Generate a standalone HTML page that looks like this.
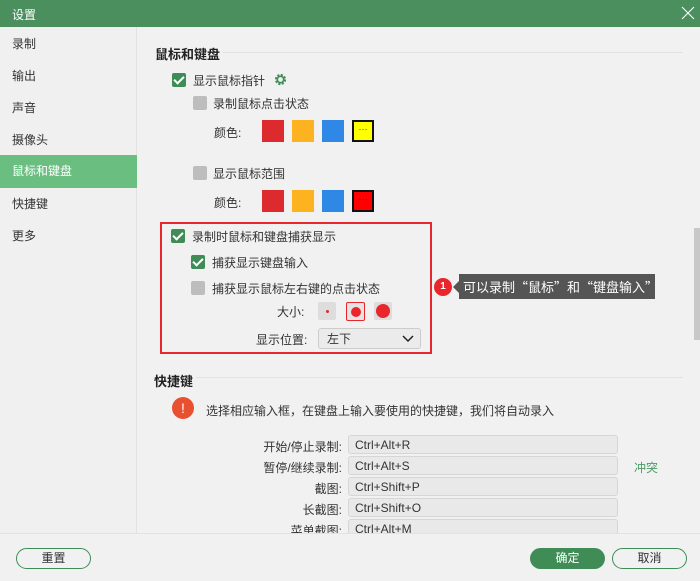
<!DOCTYPE html><html><head><meta charset="utf-8"><style>
*{margin:0;padding:0;box-sizing:border-box}
body{width:700px;height:581px;overflow:hidden;background:#f1f1f1;font-family:"Liberation Sans","Noto Sans CJK SC",sans-serif;font-size:12px;color:#333;position:relative}
.a{position:absolute;white-space:nowrap}
.cb{position:absolute;width:14px;height:14px;border-radius:2px;background:#bdbdbd}
.cb.on{background:#3f8c57}
.cb.on:after{content:"";position:absolute;left:4px;top:1px;width:4px;height:8px;border:solid #fff;border-width:0 2px 2px 0;transform:rotate(45deg)}
.sw{position:absolute;width:22px;height:22px}
.side div{position:absolute;left:0;width:137px;height:32px;line-height:32px;padding-left:12px;font-size:12px;color:#333}
.inp{position:absolute;left:348px;width:270px;height:19px;background:#e9e9e9;border:1px solid #d6d6d6;border-radius:3px;padding-left:6px;line-height:19px;font-size:12px}
.lb{position:absolute;right:358px;text-align:right}
.btn{position:absolute;height:21px;border-radius:11px;text-align:center;line-height:19px;font-size:12px}
</style></head><body>
<div class="a" style="left:0;top:0;width:700px;height:27px;background:#4a8f5d"></div>
<div class="a" style="left:12px;top:6px;color:#fff;font-size:12px">设置</div>
<svg class="a" style="left:681px;top:6px" width="14" height="14"><path d="M1 1L13 13M13 1L1 13" stroke="#fff" stroke-width="1.1"/></svg>
<div class="a" style="left:0;top:27px;width:137px;height:506px;background:#f0f0f0;border-right:1px solid #e2e2e2"></div>
<div class="side">
<div style="top:28px">录制</div><div style="top:60px">输出</div><div style="top:92px">声音</div><div style="top:124px">摄像头</div>
<div style="top:155px;background:#6abf80;color:#fff;height:33px">鼠标和键盘</div>
<div style="top:188px">快捷键</div><div style="top:220px">更多</div></div>
<div class="a" style="left:155px;top:44px;font-size:13px;font-weight:bold;color:#222">鼠标和键盘</div>
<div class="a" style="left:223px;top:52px;width:460px;height:1px;background:#e2e2e2"></div>
<div class="cb on" style="left:172px;top:73px"></div><div class="a" style="left:193px;top:72px">显示鼠标指针</div>
<svg class="a" style="left:274px;top:73px" width="13" height="13" viewBox="0 0 13 13"><circle cx="6.5" cy="6.5" r="4.3" fill="none" stroke="#3f8c57" stroke-width="2.6" stroke-dasharray="2 1.4"/><circle cx="6.5" cy="6.5" r="3.2" fill="none" stroke="#3f8c57" stroke-width="1.6"/></svg>
<div class="cb" style="left:193px;top:96px"></div><div class="a" style="left:213px;top:95px">录制鼠标点击状态</div>
<div class="a" style="left:214px;top:124px">颜色:</div>
<div class="sw" style="left:262px;top:120px;background:#dd2a2f"></div><div class="sw" style="left:292px;top:120px;background:#fdb21f"></div><div class="sw" style="left:322px;top:120px;background:#2f87e6"></div>
<div class="sw" style="left:352px;top:120px;background:#ffff00;border:2px solid #111;font-size:9px;text-align:center;line-height:14px;color:#333">···</div>
<div class="cb" style="left:193px;top:166px"></div><div class="a" style="left:213px;top:165px">显示鼠标范围</div>
<div class="a" style="left:214px;top:194px">颜色:</div>
<div class="sw" style="left:262px;top:190px;background:#dd2a2f"></div><div class="sw" style="left:292px;top:190px;background:#fdb21f"></div><div class="sw" style="left:322px;top:190px;background:#2f87e6"></div>
<div class="sw" style="left:352px;top:190px;background:#ff0000;border:2px solid #111;font-size:9px;text-align:center;line-height:14px;color:#600">···</div>
<div class="a" style="left:160px;top:222px;width:272px;height:132px;border:2px solid #e8262b"></div>
<div class="cb on" style="left:171px;top:229px"></div><div class="a" style="left:192px;top:228px">录制时鼠标和键盘捕获显示</div>
<div class="cb on" style="left:191px;top:255px"></div><div class="a" style="left:212px;top:254px">捕获显示键盘输入</div>
<div class="cb" style="left:191px;top:281px"></div><div class="a" style="left:212px;top:280px">捕获显示鼠标左右键的点击状态</div>
<div class="a" style="left:277px;top:303px">大小:</div>
<div class="a" style="left:318px;top:302px;width:18px;height:18px;background:#ddd;border-radius:2px"><div class="a" style="left:8px;top:8px;width:3px;height:3px;border-radius:50%;background:#e8262b"></div></div>
<div class="a" style="left:346px;top:302px;width:19px;height:19px;background:#e4e4e4;border:1px solid #e8262b;border-radius:2px"><div class="a" style="left:4px;top:4px;width:10px;height:10px;border-radius:50%;background:#e8262b"></div></div>
<div class="a" style="left:374px;top:302px;width:18px;height:18px;background:#ddd;border-radius:2px"><div class="a" style="left:2px;top:2px;width:14px;height:14px;border-radius:50%;background:#e8262b"></div></div>
<div class="a" style="left:256px;top:331px">显示位置:</div>
<div class="a" style="left:318px;top:328px;width:103px;height:21px;background:#ebebeb;border:1px solid #ccc;border-radius:3px;padding-left:8px;line-height:21px">左下</div>
<svg class="a" style="left:402px;top:335px" width="12" height="8"><path d="M1 1L6 6L11 1" stroke="#222" stroke-width="1.5" fill="none"/></svg>
<div class="a" style="left:434px;top:278px;width:18px;height:18px;border-radius:50%;background:#e8262b;color:#fff;font-size:10px;text-align:center;line-height:18px;font-weight:bold">1</div>
<svg class="a" style="left:452px;top:280px" width="8" height="14"><path d="M8 0L1 7L8 14Z" fill="#555"/></svg>
<div class="a" style="left:459px;top:274px;width:196px;height:25px;background:#555;color:#fff;font-size:13px;line-height:25px;padding-left:4px;font-family:'Noto Sans CJK SC',sans-serif">可以录制“鼠标”和“键盘输入”</div>
<div class="a" style="left:694px;top:228px;width:6px;height:112px;background:#c8c8c8"></div>
<div class="a" style="left:154px;top:371px;font-size:13px;font-weight:bold;color:#222">快捷键</div>
<div class="a" style="left:196px;top:377px;width:487px;height:1px;background:#e2e2e2"></div>
<div class="a" style="left:172px;top:397px;width:22px;height:22px;border-radius:50%;background:#e8502f;color:#fff;text-align:center;line-height:22px;font-size:14px">!</div>
<div class="a" style="left:206px;top:402px">选择相应输入框，在键盘上输入要使用的快捷键，我们将自动录入</div>
<div class="lb" style="top:438px">开始/停止录制:</div><div class="inp" style="top:435px">Ctrl+Alt+R</div>
<div class="lb" style="top:459px">暂停/继续录制:</div><div class="inp" style="top:456px">Ctrl+Alt+S</div>
<div class="a" style="left:634px;top:459px;color:#4a9a66">冲突</div>
<div class="lb" style="top:480px">截图:</div><div class="inp" style="top:477px">Ctrl+Shift+P</div>
<div class="lb" style="top:501px">长截图:</div><div class="inp" style="top:498px">Ctrl+Shift+O</div>
<div class="lb" style="top:522px">菜单截图:</div><div class="inp" style="top:519px">Ctrl+Alt+M</div>
<div class="a" style="left:0;top:533px;width:700px;height:48px;background:#f1f1f1;border-top:1px solid #e2e2e2"></div>
<div class="btn" style="left:16px;top:548px;width:75px;border:1.5px solid #3f8c57">重置</div>
<div class="btn" style="left:530px;top:548px;width:75px;background:#3f8c57;color:#fff;line-height:21px">确定</div>
<div class="btn" style="left:612px;top:548px;width:75px;border:1.5px solid #3f8c57">取消</div>
</body></html>
